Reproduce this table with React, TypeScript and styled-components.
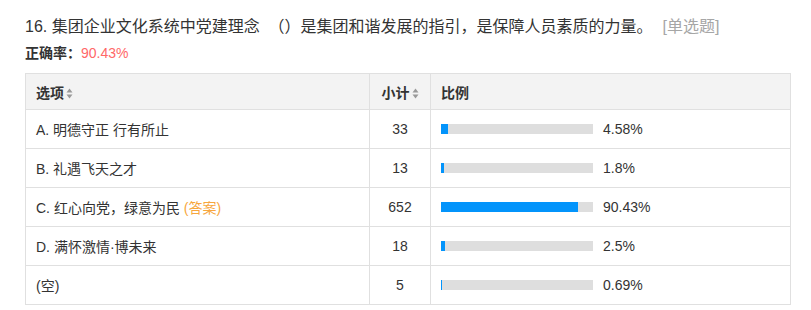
import React from 'react'
import styled, { createGlobalStyle } from 'styled-components'

const GlobalStyle = createGlobalStyle`
  body {
    margin: 0;
    background: #fff;
    font-family: "Liberation Sans", Arial, "Noto Sans CJK SC", sans-serif;
    color: #333;
  }
`

const Wrapper = styled.div`
  padding: 16px 21px 0 25px;
`

const Title = styled.div`
  font-size: 16px;
  line-height: 22px;
  color: #333;
  white-space: pre;
`

const QType = styled.span`
  color: #a6a6a6;
  margin-left: 10px;
`

const Rate = styled.div`
  margin-top: 5px;
  font-size: 14px;
  line-height: 20px;
  font-weight: bold;
  color: #333;
`

const RateValue = styled.span`
  font-weight: normal;
  color: #ff6868;
`

const Table = styled.table`
  margin-top: 10px;
  width: 766px;
  border-collapse: collapse;
  table-layout: fixed;
  font-size: 14px;
  color: #333;
`

const HeadCell = styled.th<{ $center?: boolean }>`
  height: 35px;
  padding: 0 10px;
  background: #f3f3f3;
  border: 1px solid #e0e0e0;
  font-weight: bold;
  text-align: ${p => (p.$center ? 'center' : 'left')};
`

const Cell = styled.td<{ $center?: boolean }>`
  height: 38px;
  padding: 0 10px;
  border: 1px solid #e0e0e0;
  text-align: ${p => (p.$center ? 'center' : 'left')};
  white-space: nowrap;
`

const Answer = styled.span`
  color: #f7a63d;
`

const SortIcon = styled.svg`
  width: 7px;
  height: 11px;
  margin-left: 2px;
  vertical-align: -1px;
`

const BarRow = styled.div`
  display: flex;
  align-items: center;
  gap: 10px;
`

const Track = styled.div`
  width: 152px;
  height: 10px;
  background: #dedede;
`

const Fill = styled.div`
  height: 100%;
  background: #0394fb;
`

const Sort = () => (
  <SortIcon viewBox="0 0 7 11">
    <path d="M3.5 0.5 L6.5 4.5 L0.5 4.5 Z" fill="#9a9a9a" />
    <path d="M3.5 10.5 L6.5 6.5 L0.5 6.5 Z" fill="#9a9a9a" />
  </SortIcon>
)

const rows = [
  { label: 'A. 明德守正 行有所止', count: 33, pct: 4.58 },
  { label: 'B. 礼遇飞天之才', count: 13, pct: 1.8 },
  { label: 'C. 红心向党，绿意为民', count: 652, pct: 90.43, answer: true },
  { label: 'D. 满怀激情·博未来', count: 18, pct: 2.5 },
  { label: '(空)', count: 5, pct: 0.69 },
]

export default function App() {
  return (
    <Wrapper>
      <GlobalStyle />
      <Title>
        16. 集团企业文化系统中党建理念  （）是集团和谐发展的指引，是保障人员素质的力量。
        <QType>[单选题]</QType>
      </Title>
      <Rate>
        正确率：<RateValue>90.43%</RateValue>
      </Rate>
      <Table>
        <colgroup>
          <col style={{ width: 344 }} />
          <col style={{ width: 61 }} />
          <col />
        </colgroup>
        <thead>
          <tr>
            <HeadCell>选项<Sort /></HeadCell>
            <HeadCell $center>小计<Sort /></HeadCell>
            <HeadCell>比例</HeadCell>
          </tr>
        </thead>
        <tbody>
          {rows.map(r => (
            <tr key={r.label}>
              <Cell>
                {r.label}
                {r.answer && <Answer> (答案)</Answer>}
              </Cell>
              <Cell $center>{r.count}</Cell>
              <Cell>
                <BarRow>
                  <Track>
                    <Fill style={{ width: `${Math.max(r.pct, 0.7)}%` }} />
                  </Track>
                  <span>{r.pct}%</span>
                </BarRow>
              </Cell>
            </tr>
          ))}
        </tbody>
      </Table>
    </Wrapper>
  )
}
